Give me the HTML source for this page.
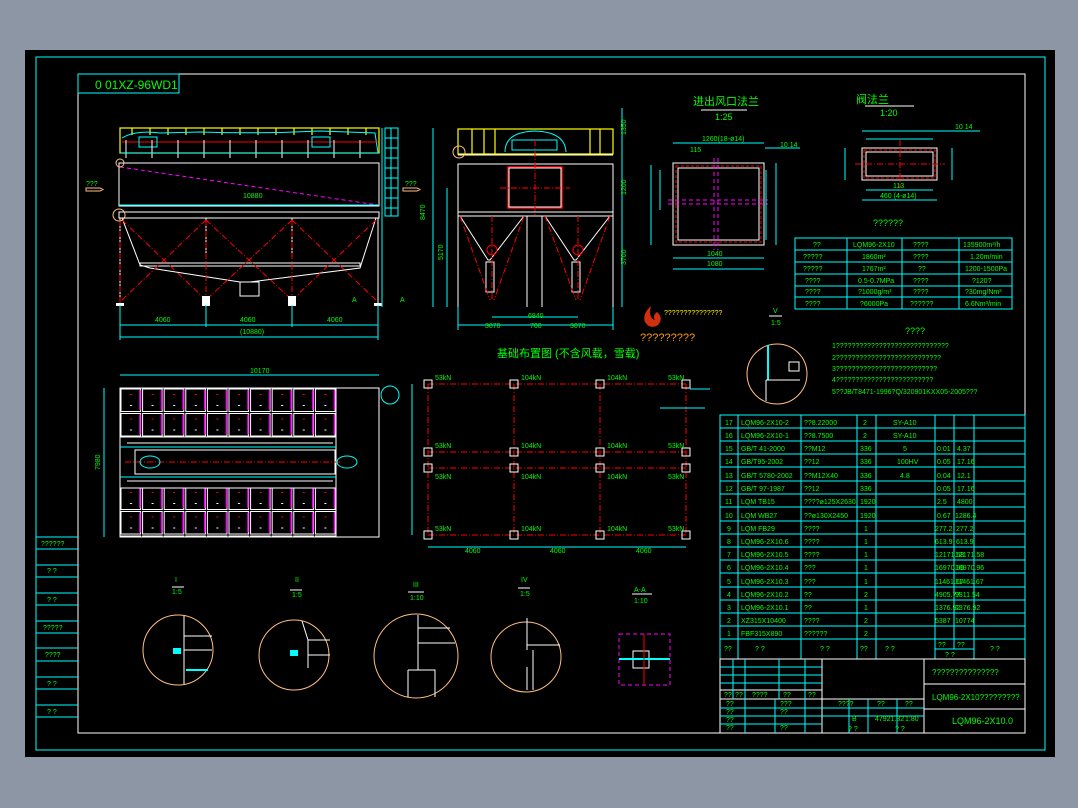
<!DOCTYPE html>
<html><head><meta charset="utf-8"><style>
html,body{margin:0;padding:0;background:#8c96a4;width:1078px;height:808px;overflow:hidden}
svg{display:block}
text{font-family:"Liberation Sans Narrow","Liberation Sans","Noto Sans CJK SC",sans-serif}
.g{fill:#00ff00;font-size:9px}
.gs{fill:#00ff00;font-size:7px}
.c{stroke:#00ffff;fill:none;stroke-width:1}
.w{stroke:#fff;fill:none;stroke-width:1}
.r{stroke:#ff0000;fill:none;stroke-width:1;stroke-dasharray:6 2 1 2}
.m{stroke:#ff00ff;fill:none;stroke-width:1;stroke-dasharray:4 3}
.y{stroke:#ffff00;fill:none;stroke-width:1.2}
.o{stroke:#ffc080;fill:none;stroke-width:1}
</style></head><body>
<svg width="1078" height="808" viewBox="0 0 1078 808" xmlns="http://www.w3.org/2000/svg">
<defs>
<pattern id="cell" x="120" y="388" width="21.6" height="24.5" patternUnits="userSpaceOnUse">
<rect x="1" y="1" width="19.6" height="22.5" fill="none" stroke="#fff" stroke-width="1"/>
<line x1="20" y1="2" x2="20" y2="22" stroke="#ff00ff" stroke-width="1.5"/>
<rect x="10" y="6" width="2" height="1" fill="#f00"/><rect x="10" y="17" width="2" height="1" fill="#fff"/>
</pattern>
</defs>
<rect x="25" y="50" width="1030" height="707" fill="#000"/>
<rect x="36" y="57" width="1009" height="693" class="c"/>
<rect x="78" y="74" width="947" height="659" class="w"/>
<rect x="78" y="74" width="101" height="19" class="c"/>
<text x="95" y="89" style="fill:#00ff00;font-size:12px">0 01XZ-96WD1</text>

<!-- left tabs -->
<g class="c">
<line x1="36" y1="537" x2="78" y2="537"/><line x1="36" y1="549" x2="78" y2="549"/>
<line x1="36" y1="565" x2="78" y2="565"/><line x1="36" y1="577" x2="78" y2="577"/>
<line x1="36" y1="593" x2="78" y2="593"/><line x1="36" y1="605" x2="78" y2="605"/>
<line x1="36" y1="621" x2="78" y2="621"/><line x1="36" y1="633" x2="78" y2="633"/>
<line x1="36" y1="648" x2="78" y2="648"/><line x1="36" y1="661" x2="78" y2="661"/>
<line x1="36" y1="677" x2="78" y2="677"/><line x1="36" y1="689" x2="78" y2="689"/>
<line x1="36" y1="705" x2="78" y2="705"/><line x1="36" y1="717" x2="78" y2="717"/>
</g>
<g class="gs"><text x="41" y="546">??????</text><text x="47" y="573">? ?</text><text x="47" y="602">? ?</text><text x="43" y="630">?????</text><text x="45" y="657">????</text><text x="47" y="686">? ?</text><text x="47" y="714">? ?</text></g>

<!-- front elevation -->
<rect x="120" y="128" width="259" height="25" class="y"/>
<g stroke="#ffff00" stroke-width="1.2"><line x1="132" y1="128" x2="132" y2="135"/><line x1="150" y1="128" x2="150" y2="135"/><line x1="168" y1="128" x2="168" y2="135"/><line x1="186" y1="128" x2="186" y2="135"/><line x1="204" y1="128" x2="204" y2="135"/><line x1="222" y1="128" x2="222" y2="135"/><line x1="240" y1="128" x2="240" y2="135"/><line x1="258" y1="128" x2="258" y2="135"/><line x1="276" y1="128" x2="276" y2="135"/><line x1="294" y1="128" x2="294" y2="135"/><line x1="312" y1="128" x2="312" y2="135"/><line x1="330" y1="128" x2="330" y2="135"/><line x1="348" y1="128" x2="348" y2="135"/><line x1="366" y1="128" x2="366" y2="135"/></g>
<path d="M122 138 Q135 130 160 133 L200 132 Q260 134 320 131 L375 133 L378 153" class="c"/>
<line x1="122" y1="142" x2="378" y2="142" stroke="#f00"/>
<rect x="139" y="137" width="18" height="10" class="c"/><rect x="312" y="137" width="18" height="10" class="c"/>
<g class="w"><line x1="126" y1="140" x2="126" y2="158"/><line x1="152" y1="140" x2="152" y2="158"/><line x1="178" y1="140" x2="178" y2="158"/><line x1="204" y1="140" x2="204" y2="158"/><line x1="230" y1="140" x2="230" y2="158"/><line x1="256" y1="140" x2="256" y2="158"/><line x1="282" y1="140" x2="282" y2="158"/><line x1="308" y1="140" x2="308" y2="158"/><line x1="334" y1="140" x2="334" y2="158"/><line x1="360" y1="140" x2="360" y2="158"/></g>
<line x1="120" y1="153" x2="379" y2="153" class="c"/>
<rect x="119" y="163" width="260" height="43" class="w"/>
<line x1="120" y1="167" x2="378" y2="205" class="m" stroke-width="1.3"/>
<line x1="119" y1="205" x2="379" y2="205" class="c"/>
<rect x="119" y="212" width="260" height="6" class="w"/>
<g class="w"><line x1="120" y1="218" x2="120" y2="305"/><line x1="378" y1="218" x2="378" y2="305"/><line x1="206" y1="218" x2="206" y2="255"/><line x1="292" y1="218" x2="292" y2="255"/>
<path d="M122 218 L140 265 L150 268 L240 282 L250 282 L360 268 L376 218"/><rect x="140" y="263" width="220" height="3"/>
<rect x="240" y="282" width="19" height="14"/></g>
<g class="r"><line x1="122" y1="220" x2="206" y2="300"/><line x1="206" y1="220" x2="122" y2="300"/><line x1="206" y1="220" x2="292" y2="300"/><line x1="292" y1="220" x2="206" y2="300"/><line x1="292" y1="220" x2="376" y2="300"/><line x1="376" y1="220" x2="292" y2="300"/><line x1="120" y1="220" x2="120" y2="305"/><line x1="206" y1="220" x2="206" y2="305"/><line x1="292" y1="220" x2="292" y2="305"/></g>
<g fill="#fff"><rect x="116" y="303" width="8" height="3"/><rect x="202" y="296" width="8" height="10"/><rect x="288" y="296" width="8" height="10"/><rect x="374" y="303" width="8" height="3"/></g>
<circle cx="119" cy="215" r="6" class="o"/><circle cx="120" cy="163" r="4" class="o"/>
<g class="c"><rect x="385" y="128" width="13" height="88"/><line x1="391" y1="128" x2="391" y2="216"/><line x1="385" y1="138" x2="398" y2="138"/><line x1="385" y1="148" x2="398" y2="148"/><line x1="385" y1="158" x2="398" y2="158"/><line x1="385" y1="168" x2="398" y2="168"/><line x1="385" y1="178" x2="398" y2="178"/><line x1="385" y1="188" x2="398" y2="188"/><line x1="385" y1="198" x2="398" y2="198"/><line x1="385" y1="208" x2="398" y2="208"/><line x1="382" y1="128" x2="382" y2="307"/>
<line x1="120" y1="305" x2="120" y2="340"/><line x1="378" y1="305" x2="378" y2="340"/><line x1="206" y1="305" x2="206" y2="327"/><line x1="292" y1="305" x2="292" y2="327"/><line x1="120" y1="325" x2="378" y2="325"/><line x1="120" y1="337" x2="378" y2="337"/></g>
<text x="86" y="186" class="gs">???</text><text x="405" y="186" class="gs">???</text>
<path d="M86 188 h14 l3 1.5 l-3 1.5 h-14z M403 188 h14 l3 1.5 l-3 1.5 h-14z" fill="none" stroke="#ffc080"/>
<text x="243" y="198" class="gs">10880</text><text x="155" y="322" class="gs">4060</text><text x="240" y="322" class="gs">4060</text><text x="327" y="322" class="gs">4060</text><text x="240" y="334" class="gs">(10880)</text>
<text x="352" y="302" class="gs">A</text><text x="400" y="302" class="gs">A</text>

<!-- side view -->
<rect x="458" y="129" width="155" height="25" class="y"/>
<g stroke="#ffff00" stroke-width="1.2"><line x1="472" y1="129" x2="472" y2="154"/><line x1="484" y1="129" x2="484" y2="154"/><line x1="495" y1="129" x2="495" y2="154"/><line x1="590" y1="129" x2="590" y2="154"/><line x1="600" y1="129" x2="600" y2="154"/></g>
<path d="M505 152 Q505 132 535 131 Q565 132 566 152" class="c"/>
<rect x="512" y="140" width="45" height="10" class="c"/>
<line x1="458" y1="155" x2="613" y2="155" class="w"/><rect x="458" y="164" width="155" height="48" class="w"/>
<rect x="508" y="167" width="54" height="41" stroke="#f00" fill="none" stroke-width="1.5"/><rect x="509" y="168" width="52" height="39" class="w"/>
<line x1="535" y1="140" x2="535" y2="215" class="r"/><line x1="500" y1="188" x2="570" y2="188" class="r"/>
<rect x="458" y="212" width="155" height="4" class="w"/>
<g class="w"><line x1="458" y1="216" x2="458" y2="307"/><line x1="613" y1="216" x2="613" y2="307"/><line x1="527" y1="216" x2="527" y2="307"/><line x1="542" y1="216" x2="542" y2="307"/>
<path d="M460 216 L488 260 L490 260 L524 216 M545 216 L574 260 L576 260 L610 216"/><rect x="486" y="262" width="8" height="30"/><rect x="572" y="262" width="8" height="30"/></g>
<circle cx="492" cy="250" r="5" stroke="#f00" fill="none"/><circle cx="578" cy="250" r="5" stroke="#f00" fill="none"/>
<g class="r"><line x1="492" y1="216" x2="492" y2="300"/><line x1="578" y1="216" x2="578" y2="300"/><line x1="460" y1="216" x2="490" y2="300"/><line x1="524" y1="216" x2="494" y2="300"/><line x1="545" y1="216" x2="576" y2="300"/><line x1="610" y1="216" x2="580" y2="300"/></g>
<circle cx="459" cy="152" r="6" class="o"/>
<g class="c"><line x1="433" y1="128" x2="433" y2="307"/><line x1="447" y1="188" x2="447" y2="307"/><line x1="622" y1="108" x2="622" y2="307"/><line x1="458" y1="325" x2="613" y2="325"/><line x1="492" y1="317" x2="578" y2="317"/><line x1="458" y1="307" x2="458" y2="330"/><line x1="613" y1="307" x2="613" y2="330"/></g>
<g class="gs"><text x="485" y="328">3070</text><text x="530" y="328">700</text><text x="570" y="328">3070</text><text x="528" y="318">6840</text><text x="425" y="220" transform="rotate(-90 425 220)">8470</text><text x="443" y="260" transform="rotate(-90 443 260)">5170</text><text x="626" y="135" transform="rotate(-90 626 135)">1350</text><text x="626" y="195" transform="rotate(-90 626 195)">1200</text><text x="626" y="265" transform="rotate(-90 626 265)">3700</text></g>
<text x="497" y="357" style="fill:#00ff00;font-size:11px;font-family:'Liberation Sans','Noto Sans CJK SC',sans-serif">基础布置图 (不含风载，雪载)</text>

<!-- flange 1 -->
<text x="693" y="105" style="fill:#00ff00;font-size:11px;font-family:'Liberation Sans','Noto Sans CJK SC',sans-serif">进出风口法兰</text>
<line x1="701" y1="110" x2="747" y2="110" class="w"/><text x="715" y="120" class="g">1:25</text>
<rect x="673" y="163" width="91" height="82" class="w"/><rect x="676" y="166" width="85" height="76" stroke="#f00" stroke-dasharray="3 2" fill="none"/>
<rect x="678" y="168" width="81" height="72" class="w"/>
<line x1="714" y1="158" x2="714" y2="250" class="m"/><line x1="718" y1="158" x2="718" y2="250" class="m"/><line x1="668" y1="200" x2="768" y2="200" class="m"/><line x1="668" y1="204" x2="768" y2="204" class="m"/>
<g class="c"><line x1="673" y1="143" x2="764" y2="143"/><line x1="673" y1="258" x2="764" y2="258"/><line x1="673" y1="269" x2="764" y2="269"/><line x1="651" y1="165" x2="651" y2="245"/><line x1="660" y1="170" x2="660" y2="210"/><line x1="776" y1="163" x2="776" y2="245"/><line x1="766" y1="170" x2="766" y2="240"/><line x1="765" y1="148" x2="800" y2="148"/></g>
<g class="gs"><text x="702" y="141">1260(18-ø14)</text><text x="690" y="152">115</text><text x="707" y="256">1040</text><text x="707" y="266">1080</text><text x="780" y="147">10 14</text></g>

<!-- flange 2 -->
<text x="856" y="103" style="fill:#00ff00;font-size:11px;font-family:'Liberation Sans','Noto Sans CJK SC',sans-serif">阀法兰</text>
<line x1="865" y1="106" x2="914" y2="106" class="w"/><text x="880" y="116" class="g">1:20</text>
<rect x="862" y="148" width="75" height="32" class="w"/><rect x="864" y="150" width="71" height="28" stroke="#f00" stroke-dasharray="3 2" fill="none"/><rect x="866" y="152" width="67" height="24" class="w"/>
<line x1="855" y1="164" x2="945" y2="164" class="r"/><line x1="900" y1="140" x2="900" y2="188" class="r"/>
<g class="c"><line x1="862" y1="131" x2="937" y2="131"/><line x1="866" y1="139" x2="933" y2="139"/><line x1="862" y1="200" x2="937" y2="200"/><line x1="866" y1="190" x2="933" y2="190"/><line x1="845" y1="148" x2="845" y2="180"/><line x1="952" y1="148" x2="952" y2="180"/><line x1="937" y1="131" x2="980" y2="131"/></g>
<g class="gs"><text x="955" y="129">10 14</text><text x="880" y="198">460 (4-ø14)</text><text x="893" y="188">113</text></g>

<!-- params table -->
<text x="873" y="226" class="g">??????</text>
<rect x="795" y="238" width="217" height="71" class="c"/>
<g class="c"><line x1="795" y1="250" x2="1012" y2="250"/><line x1="795" y1="262" x2="1012" y2="262"/><line x1="795" y1="274" x2="1012" y2="274"/><line x1="795" y1="286" x2="1012" y2="286"/><line x1="795" y1="297" x2="1012" y2="297"/><line x1="847" y1="238" x2="847" y2="309"/><line x1="902" y1="238" x2="902" y2="309"/><line x1="959" y1="238" x2="959" y2="309"/></g>
<g class="gs"><text x="813" y="247">??</text><text x="853" y="247">LQM96-2X10</text><text x="913" y="247">????</text><text x="963" y="247">135900m³/h</text>
<text x="803" y="259">?????</text><text x="862" y="259">1860m²</text><text x="913" y="259">????</text><text x="970" y="259">1.20m/min</text>
<text x="803" y="271">?????</text><text x="862" y="271">1767m²</text><text x="918" y="271">??</text><text x="965" y="271">1200-1500Pa</text>
<text x="805" y="283">????</text><text x="858" y="283">0.5-0.7MPa</text><text x="913" y="283">????</text><text x="972" y="283">?120?</text>
<text x="805" y="294">????</text><text x="858" y="294">?1000g/m³</text><text x="913" y="294">????</text><text x="965" y="294">?30mg/Nm³</text>
<text x="805" y="306">????</text><text x="860" y="306">?6000Pa</text><text x="910" y="306">??????</text><text x="965" y="306">6.6Nm³/min</text></g>

<!-- logo -->
<path d="M651 306 Q642 314 645 322 Q650 330 658 325 Q664 318 657 312 Q652 316 655 320 Q648 318 651 306z" fill="#d03010"/>
<text x="664" y="315" style="fill:#ffee00;font-size:7px">???????????????</text>
<text x="640" y="341" style="fill:#ff9900;font-size:11px">?????????</text>

<!-- V detail + notes -->
<text x="773" y="313" class="gs">V</text><line x1="769" y1="316" x2="782" y2="316" class="w"/><text x="771" y="325" class="gs">1:5</text>
<circle cx="777" cy="374" r="30" class="o"/>
<line x1="768" y1="345" x2="768" y2="380" stroke="#00ffff" stroke-width="2"/><line x1="766" y1="380" x2="800" y2="380" class="w"/><line x1="766" y1="380" x2="766" y2="401" class="w"/><rect x="789" y="362" width="10" height="9" class="w"/>
<text x="905" y="334" class="g">????</text>
<g class="gs"><text x="832" y="348">1?????????????????????????????</text><text x="832" y="360">2???????????????????????????</text><text x="832" y="371">3??????????????????????????</text><text x="832" y="382">4?????????????????????????</text><text x="832" y="394">5??JB/T8471-1996?Q/320901KXX05-2005???</text></g>

<!-- plan view -->
<rect x="120" y="388" width="216" height="49" fill="url(#cell)"/>
<rect x="120" y="488" width="216" height="49" fill="url(#cell)"/>
<rect x="120" y="388" width="259" height="149" class="w"/>
<rect x="120" y="388" width="216" height="149" class="w"/>
<line x1="120" y1="437" x2="336" y2="437" class="w"/><line x1="120" y1="488" x2="336" y2="488" class="w"/>
<line x1="120" y1="447" x2="336" y2="447" class="c"/><line x1="120" y1="477" x2="336" y2="477" class="c"/>
<rect x="135" y="450" width="200" height="24" class="w"/>
<line x1="125" y1="462" x2="340" y2="462" class="r"/>
<ellipse cx="150" cy="462" rx="10" ry="6" class="c"/><ellipse cx="347" cy="462" rx="10" ry="6" class="c"/>
<g class="w"><line x1="127" y1="443" x2="333" y2="443"/><line x1="127" y1="481" x2="333" y2="481"/></g>
<circle cx="390" cy="395" r="9" class="c"/>
<g class="c"><line x1="120" y1="375" x2="379" y2="375"/><line x1="104" y1="388" x2="104" y2="537"/></g>
<text x="250" y="373" class="gs">10170</text><text x="100" y="470" class="gs" transform="rotate(-90 100 470)">7980</text>

<!-- foundation grid -->
<g class="r"><line x1="428" y1="384" x2="686" y2="384"/><line x1="428" y1="452" x2="686" y2="452"/><line x1="428" y1="468" x2="686" y2="468"/><line x1="428" y1="535" x2="686" y2="535"/><line x1="428" y1="384" x2="428" y2="535"/><line x1="514" y1="384" x2="514" y2="535"/><line x1="600" y1="384" x2="600" y2="535"/><line x1="686" y1="384" x2="686" y2="535"/></g>
<g class="w">
<rect x="424" y="380" width="8" height="8"/><rect x="510" y="380" width="8" height="8"/><rect x="596" y="380" width="8" height="8"/><rect x="682" y="380" width="8" height="8"/>
<rect x="424" y="448" width="8" height="8"/><rect x="510" y="448" width="8" height="8"/><rect x="596" y="448" width="8" height="8"/><rect x="682" y="448" width="8" height="8"/>
<rect x="424" y="464" width="8" height="8"/><rect x="510" y="464" width="8" height="8"/><rect x="596" y="464" width="8" height="8"/><rect x="682" y="464" width="8" height="8"/>
<rect x="424" y="531" width="8" height="8"/><rect x="510" y="531" width="8" height="8"/><rect x="596" y="531" width="8" height="8"/><rect x="682" y="531" width="8" height="8"/></g>
<g class="gs"><text x="435" y="380">53kN</text><text x="521" y="380">104kN</text><text x="607" y="380">104kN</text><text x="668" y="380">53kN</text>
<text x="435" y="448">53kN</text><text x="521" y="448">104kN</text><text x="607" y="448">104kN</text><text x="668" y="448">53kN</text>
<text x="435" y="479">53kN</text><text x="521" y="479">104kN</text><text x="607" y="479">104kN</text><text x="668" y="479">53kN</text>
<text x="435" y="531">53kN</text><text x="521" y="531">104kN</text><text x="607" y="531">104kN</text><text x="668" y="531">53kN</text>
<text x="465" y="553">4060</text><text x="550" y="553">4060</text><text x="636" y="553">4060</text></g>
<g class="c"><line x1="412" y1="384" x2="412" y2="535"/><line x1="428" y1="547" x2="686" y2="547"/><line x1="690" y1="389" x2="710" y2="389"/><line x1="660" y1="408" x2="705" y2="408"/></g>

<!-- detail circles -->
<g class="gs"><text x="175" y="582">I</text><text x="172" y="594">1:5</text><text x="295" y="582">II</text><text x="292" y="597">1:5</text><text x="413" y="587">III</text><text x="410" y="600">1:10</text><text x="521" y="582">IV</text><text x="520" y="596">1:5</text><text x="634" y="592">A-A</text><text x="634" y="603">1:10</text></g>
<g class="w"><line x1="172" y1="587" x2="184" y2="587"/><line x1="290" y1="590" x2="302" y2="590"/><line x1="408" y1="592" x2="424" y2="592"/><line x1="518" y1="588" x2="530" y2="588"/><line x1="632" y1="594" x2="652" y2="594"/></g>
<circle cx="178" cy="650" r="35" class="o"/><circle cx="294" cy="655" r="35" class="o"/><circle cx="416" cy="656" r="42" class="o"/><circle cx="526" cy="657" r="35" class="o"/>
<g class="w"><path d="M184 616 V684 M184 636 H212 M184 650 H212"/><path d="M302 621 L308 640 V668 M308 640 H330 M308 655 H330"/><path d="M418 615 V670 M418 628 H450 M418 643 H455 M408 670 H435 V697 M408 670 V697"/><path d="M527 618 V650 M527 645 H560 M527 667 V690 M533 650 V690"/></g>
<rect x="173" y="648" width="8" height="6" fill="#00ffff"/><rect x="290" y="650" width="8" height="6" fill="#00ffff"/><line x1="186" y1="670" x2="208" y2="670" stroke="#00ffff" stroke-width="2"/>
<rect x="619" y="634" width="51" height="51" class="m" stroke-width="1.5" stroke-dasharray="none"/>
<rect x="633" y="651" width="16" height="17" class="w" stroke-width="2"/><line x1="619" y1="659" x2="670" y2="659" stroke="#00ffff" stroke-width="2"/><line x1="644" y1="634" x2="644" y2="685" stroke="#f00"/>

<!-- parts table -->
<g class="c">
<rect x="720" y="415" width="305" height="244"/>
<line x1="720" y1="428" x2="1025" y2="428"/><line x1="720" y1="441" x2="1025" y2="441"/><line x1="720" y1="454" x2="1025" y2="454"/><line x1="720" y1="467" x2="1025" y2="467"/><line x1="720" y1="481" x2="1025" y2="481"/><line x1="720" y1="494" x2="1025" y2="494"/><line x1="720" y1="507" x2="1025" y2="507"/><line x1="720" y1="521" x2="1025" y2="521"/><line x1="720" y1="534" x2="1025" y2="534"/><line x1="720" y1="547" x2="1025" y2="547"/><line x1="720" y1="560" x2="1025" y2="560"/><line x1="720" y1="573" x2="1025" y2="573"/><line x1="720" y1="587" x2="1025" y2="587"/><line x1="720" y1="600" x2="1025" y2="600"/><line x1="720" y1="613" x2="1025" y2="613"/><line x1="720" y1="626" x2="1025" y2="626"/><line x1="720" y1="639" x2="1025" y2="639"/><line x1="935" y1="649" x2="974" y2="649"/>
<line x1="738" y1="415" x2="738" y2="659"/><line x1="801" y1="415" x2="801" y2="659"/><line x1="857" y1="415" x2="857" y2="659"/><line x1="876" y1="415" x2="876" y2="659"/><line x1="935" y1="415" x2="935" y2="659"/><line x1="954" y1="415" x2="954" y2="649"/><line x1="974" y1="415" x2="974" y2="659"/>
</g>
<g class="gs">
<text x="725" y="425">17</text><text x="741" y="425">LQM96-2X10-2</text><text x="804" y="425">??8.22000</text><text x="863" y="425">2</text><text x="893" y="425">SY-A10</text>
<text x="725" y="438">16</text><text x="741" y="438">LQM96-2X10-1</text><text x="804" y="438">??8.7500</text><text x="863" y="438">2</text><text x="893" y="438">SY-A10</text>
<text x="725" y="451">15</text><text x="741" y="451">GB/T 41-2000</text><text x="804" y="451">??M12</text><text x="860" y="451">336</text><text x="903" y="451">5</text><text x="937" y="451">0.01</text><text x="957" y="451">4.37</text>
<text x="725" y="464">14</text><text x="741" y="464">GB/T95-2002</text><text x="804" y="464">??12</text><text x="860" y="464">336</text><text x="897" y="464">100HV</text><text x="937" y="464">0.05</text><text x="957" y="464">17.16</text>
<text x="725" y="478">13</text><text x="741" y="478">GB/T 5780-2002</text><text x="804" y="478">??M12X40</text><text x="860" y="478">336</text><text x="900" y="478">4.8</text><text x="937" y="478">0.04</text><text x="957" y="478">12.1</text>
<text x="725" y="491">12</text><text x="741" y="491">GB/T 97-1987</text><text x="804" y="491">??12</text><text x="860" y="491">336</text><text x="937" y="491">0.05</text><text x="957" y="491">17.16</text>
<text x="725" y="504">11</text><text x="741" y="504">LQM TB15</text><text x="804" y="504">????ø125X2630</text><text x="860" y="504">1920</text><text x="937" y="504">2.5</text><text x="957" y="504">4800</text>
<text x="725" y="518">10</text><text x="741" y="518">LQM WB27</text><text x="804" y="518">??ø130X2450</text><text x="860" y="518">1920</text><text x="937" y="518">0.67</text><text x="955" y="518">1286.4</text>
<text x="727" y="531">9</text><text x="741" y="531">LQM FB29</text><text x="804" y="531">????</text><text x="864" y="531">1</text><text x="935" y="531">277.2</text><text x="956" y="531">277.2</text>
<text x="727" y="544">8</text><text x="741" y="544">LQM96-2X10.6</text><text x="804" y="544">????</text><text x="864" y="544">1</text><text x="935" y="544">613.9</text><text x="956" y="544">613.9</text>
<text x="727" y="557">7</text><text x="741" y="557">LQM96-2X10.5</text><text x="804" y="557">????</text><text x="864" y="557">1</text><text x="935" y="557">12171.58</text><text x="955" y="557">12171.58</text>
<text x="727" y="570">6</text><text x="741" y="570">LQM96-2X10.4</text><text x="804" y="570">???</text><text x="864" y="570">1</text><text x="935" y="570">16970.96</text><text x="955" y="570">16970.96</text>
<text x="727" y="584">5</text><text x="741" y="584">LQM96-2X10.3</text><text x="804" y="584">???</text><text x="864" y="584">1</text><text x="935" y="584">11461.67</text><text x="955" y="584">11461.67</text>
<text x="727" y="597">4</text><text x="741" y="597">LQM96-2X10.2</text><text x="804" y="597">??</text><text x="864" y="597">2</text><text x="935" y="597">4905.77</text><text x="955" y="597">9811.54</text>
<text x="727" y="610">3</text><text x="741" y="610">LQM96-2X10.1</text><text x="804" y="610">??</text><text x="864" y="610">1</text><text x="935" y="610">1376.92</text><text x="955" y="610">1376.92</text>
<text x="727" y="623">2</text><text x="741" y="623">XZ315X10400</text><text x="804" y="623">????</text><text x="864" y="623">2</text><text x="935" y="623">5387</text><text x="955" y="623">10774</text>
<text x="727" y="636">1</text><text x="741" y="636">FBF315X890</text><text x="804" y="636">??????</text><text x="864" y="636">2</text>
<text x="724" y="651">??</text><text x="755" y="651">? ?</text><text x="820" y="651">? ?</text><text x="860" y="651">??</text><text x="885" y="651">? ?</text><text x="938" y="647">??</text><text x="957" y="647">??</text><text x="945" y="657">? ?</text><text x="990" y="651">? ?</text>
</g>
<!-- title block -->
<g class="w"><rect x="720" y="659" width="305" height="74"/><line x1="822" y1="659" x2="822" y2="733"/><line x1="924" y1="659" x2="924" y2="733"/><line x1="924" y1="684" x2="1025" y2="684"/><line x1="924" y1="709" x2="1025" y2="709"/><line x1="720" y1="699" x2="822" y2="699"/><line x1="822" y1="699" x2="924" y2="699"/><line x1="720" y1="690" x2="822" y2="690"/></g>
<g class="c"><line x1="720" y1="667" x2="822" y2="667"/><line x1="720" y1="675" x2="822" y2="675"/><line x1="720" y1="683" x2="822" y2="683"/><line x1="720" y1="708" x2="822" y2="708"/><line x1="720" y1="716" x2="822" y2="716"/><line x1="720" y1="724" x2="822" y2="724"/><line x1="822" y1="708" x2="924" y2="708"/><line x1="822" y1="716" x2="924" y2="716"/><line x1="733" y1="659" x2="733" y2="699"/><line x1="745" y1="659" x2="745" y2="733"/><line x1="779" y1="659" x2="779" y2="699"/><line x1="805" y1="659" x2="805" y2="733"/><line x1="849" y1="699" x2="849" y2="733"/><line x1="868" y1="699" x2="868" y2="733"/><line x1="897" y1="699" x2="897" y2="733"/><line x1="775" y1="699" x2="775" y2="733"/></g>
<g class="gs"><text x="724" y="697">??</text><text x="735" y="697">??</text><text x="752" y="697">????</text><text x="783" y="697">??</text><text x="808" y="697">??</text><text x="726" y="706">??</text><text x="726" y="714">??</text><text x="726" y="722">??</text><text x="726" y="730">??</text><text x="780" y="706">???</text><text x="780" y="714">??</text><text x="780" y="730">??</text><text x="838" y="706">????</text><text x="877" y="706">??</text><text x="905" y="706">??</text><text x="852" y="721">B</text><text x="875" y="721">47921.32</text><text x="905" y="721">1:80</text><text x="848" y="731">? ?</text><text x="895" y="731">? ?</text>
<text x="932" y="675" style="font-size:8px">???????????????</text><text x="932" y="700" style="font-size:8px">LQM96-2X10?????????</text></g>
<text x="952" y="724" class="g">LQM96-2X10.0</text>
</svg>
</body></html>
